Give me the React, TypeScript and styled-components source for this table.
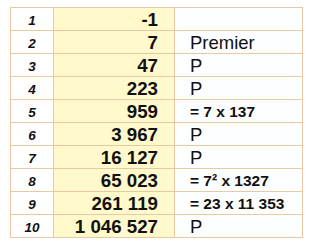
import React from "react";
import styled, { createGlobalStyle } from "styled-components";

const Global = createGlobalStyle`
  html, body { margin: 0; padding: 0; background: #ffffff; }
  body { font-family: "Liberation Sans", Arial, sans-serif; }
`;

const Page = styled.div`
  padding: 7px 0 0 10px;
`;

const Grid = styled.div`
  display: inline-grid;
  grid-template-columns: 42px 120px 127px;
  grid-auto-rows: 22px;
  gap: 1px;
  padding: 1px;
  background: #eac8a4;
`;

const IndexCell = styled.div`
  background: #ffffff;
  display: flex;
  align-items: center;
  justify-content: center;
  font-weight: bold;
  font-style: italic;
  font-size: 13.5px;
  color: #111;
  padding-top: 2px;
`;

const ValueCell = styled.div`
  background: #fff9cb;
  display: flex;
  align-items: center;
  justify-content: flex-end;
  padding: 2px 16px 0 0;
  font-weight: bold;
  font-size: 18.7px;
  color: #111;
  white-space: nowrap;
`;

const NoteCell = styled.div<{ $bold?: boolean }>`
  background: #fdfeff;
  display: flex;
  align-items: center;
  padding: 2px 0 0 15px;
  font-weight: ${(p) => (p.$bold ? "bold" : "normal")};
  font-size: ${(p) => (p.$bold ? "15.5px" : "18.5px")};
  color: #111;
  white-space: nowrap;
`;

const rows: { v: string; n: string; b?: boolean }[] = [
  { v: "-1", n: "" },
  { v: "7", n: "Premier" },
  { v: "47", n: "P" },
  { v: "223", n: "P" },
  { v: "959", n: "= 7 x 137", b: true },
  { v: "3 967", n: "P" },
  { v: "16 127", n: "P" },
  { v: "65 023", n: "= 7² x 1327", b: true },
  { v: "261 119", n: "= 23 x 11 353", b: true },
  { v: "1 046 527", n: "P" },
];

export default function App() {
  return (
    <>
      <Global />
      <Page>
        <Grid>
          {rows.map((r, i) => (
            <React.Fragment key={i}>
              <IndexCell>{i + 1}</IndexCell>
              <ValueCell>{r.v}</ValueCell>
              <NoteCell $bold={r.b}>{r.n}</NoteCell>
            </React.Fragment>
          ))}
        </Grid>
      </Page>
    </>
  );
}
